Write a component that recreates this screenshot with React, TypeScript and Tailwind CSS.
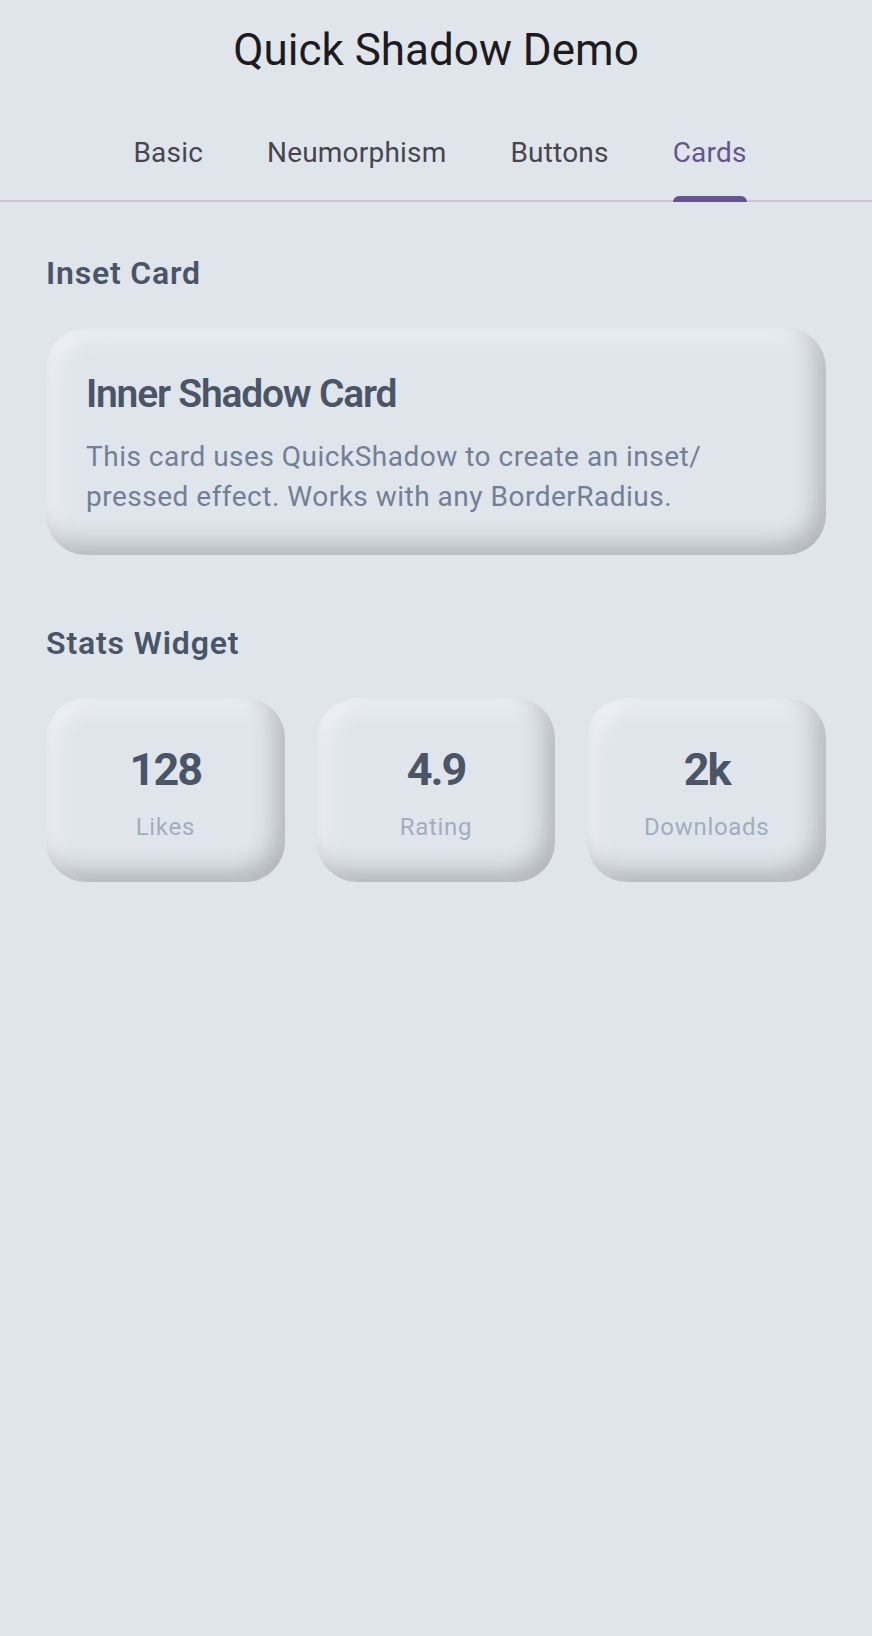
const tabs = ['Basic', 'Neumorphism', 'Buttons', 'Cards']

const stats = [
  { value: '128', label: 'Likes' },
  { value: '4.9', label: 'Rating' },
  { value: '2k', label: 'Downloads' },
]

const insetShadow =
  'shadow-[inset_-10px_-12px_22px_rgba(0,0,0,0.2),inset_10px_10px_20px_rgba(255,255,255,0.45)]'

export default function App() {
  return (
    <div className="min-h-screen w-full bg-[#e0e5ec] font-['Roboto',sans-serif]">
      <header className="flex h-[96px] items-center justify-center pt-[4px]">
        <h1 className="text-[44px] leading-[52px] font-normal text-[#1d1b20]">Quick Shadow Demo</h1>
      </header>

      <nav className="flex justify-center border-b-2 border-[#cac4d0] pl-[8px]">
        {tabs.map((tab) => {
          const active = tab === 'Cards'
          return (
            <button
              className={`relative flex h-[104px] items-center px-[32px] pt-[10px] text-[28px] leading-[40px] tracking-[0.2px] ${
                active ? 'text-[#65558f]' : 'text-[#49454f]'
              }`}
              key={tab}
              type="button"
            >
              {tab}
              {active ? (
                <span className="absolute right-[32px] bottom-[-2px] left-[32px] h-[6px] rounded-t-[6px] bg-[#65558f]" />
              ) : null}
            </button>
          )
        })}
      </nav>

      <main className="px-[46px] pt-[52px]">
        <h2 className="text-[32px] leading-[38px] font-semibold tracking-[0.8px] text-[#4a5568]">Inset Card</h2>
        <section className={`mt-[36px] rounded-[40px] bg-[#e0e5ec] px-[40px] pt-[42px] pb-[38px] ${insetShadow}`}>
          <h3 className="text-[39px] leading-[48px] font-semibold tracking-[-1.2px] text-[#4a5568]">
            Inner Shadow Card
          </h3>
          <p className="mt-[19px] max-w-[660px] text-[28px] leading-[40px] tracking-[0.5px] text-[#718096]">
            This card uses QuickShadow to create an inset/ pressed effect. Works with any BorderRadius.
          </p>
        </section>

        <h2 className="mt-[69px] text-[32px] leading-[38px] font-semibold tracking-[0.85px] text-[#4a5568]">
          Stats Widget
        </h2>
        <div className="mt-[36px] grid grid-cols-3 gap-[32px]">
          {stats.map((stat) => (
            <div
              className={`flex h-[184px] flex-col items-center justify-center rounded-[40px] bg-[#e0e5ec] ${insetShadow}`}
              key={stat.label}
            >
              <span className="mt-[2px] text-[45px] leading-[56px] font-bold tracking-[-2px] text-[#4a5568]">
                {stat.value}
              </span>
              <span className="mt-[15px] text-[24px] leading-[28px] tracking-[0.7px] text-[#a0aec0]">
                {stat.label}
              </span>
            </div>
          ))}
        </div>
      </main>
    </div>
  )
}
